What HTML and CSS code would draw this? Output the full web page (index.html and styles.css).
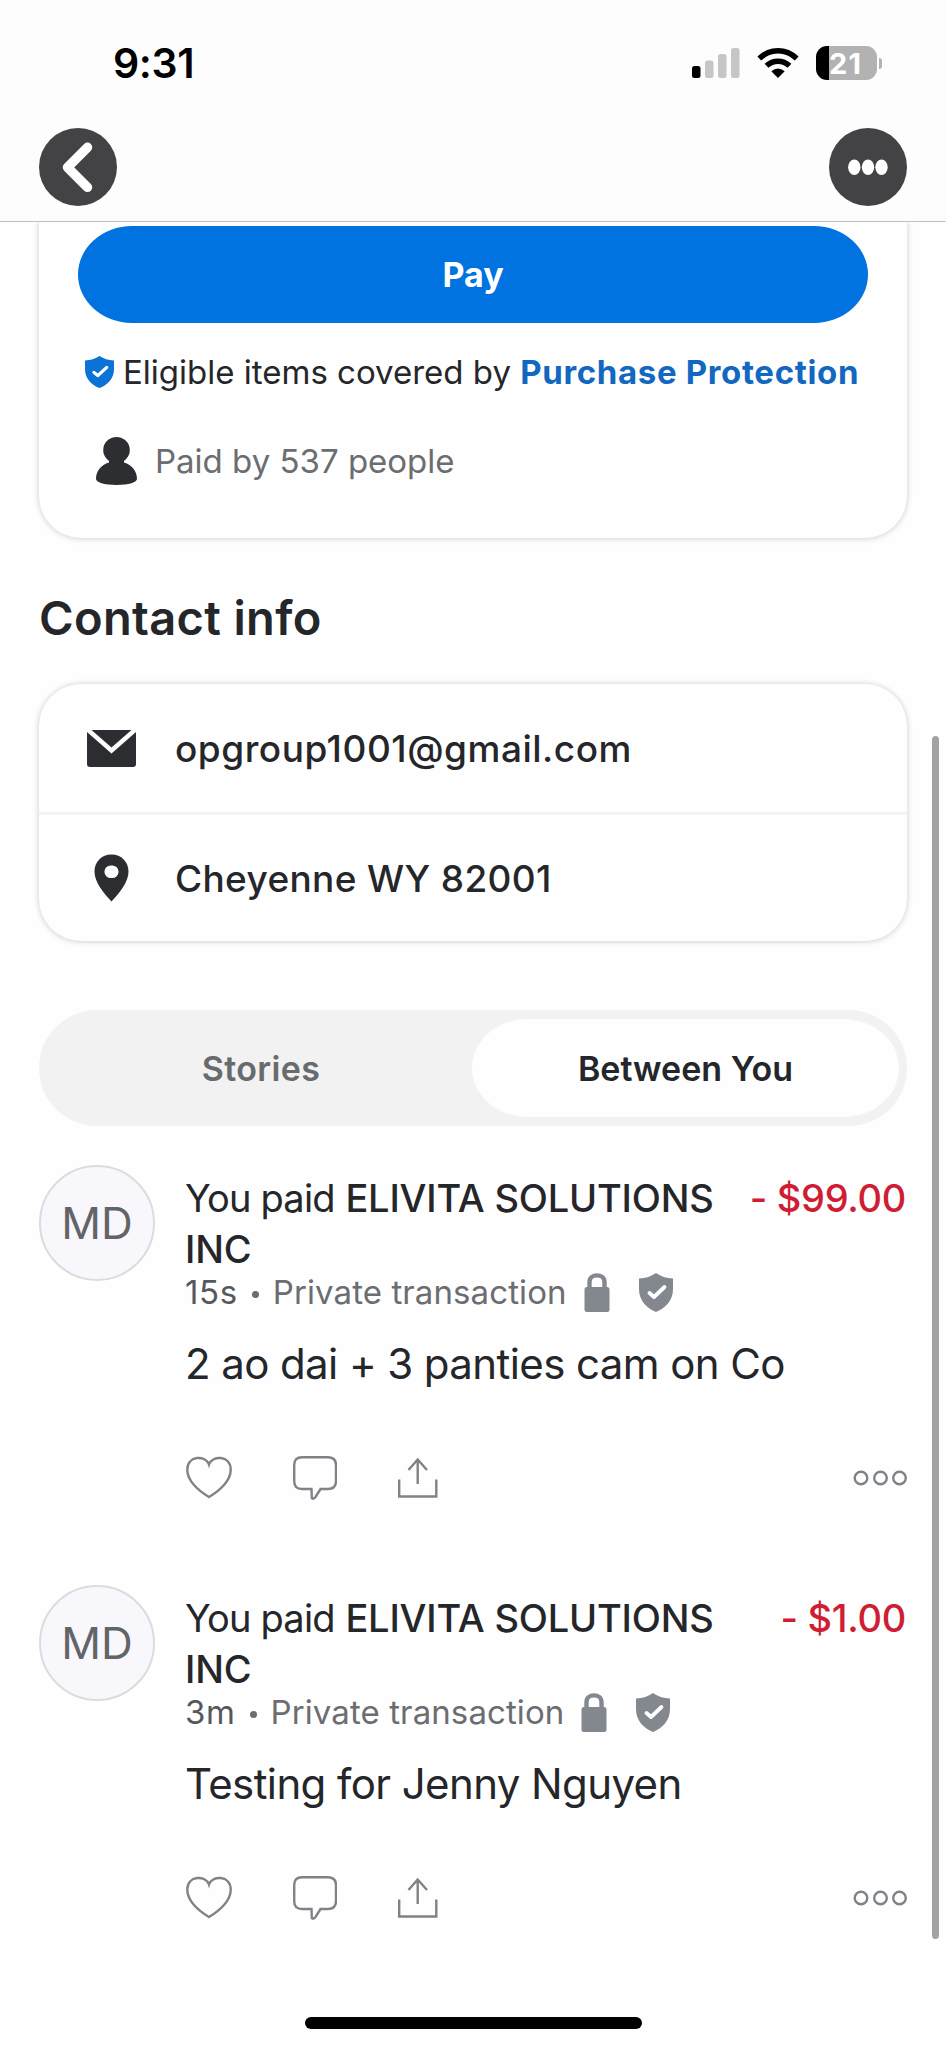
FILE: index.html
```
<!DOCTYPE html>
<html lang="en">
<head>
  <meta charset="UTF-8" />
  <meta name="viewport" content="width=device-width, initial-scale=1.0"/>
  <title>ELIVITA SOLUTIONS INC</title>
  <link rel="stylesheet" href="styles.css">
</head>
<body>

  <!-- shared icons -->
  <svg class="sprite" width="0" height="0">
    <symbol id="icon-shield" viewBox="0 0 34 39">
      <path fill="currentColor" d="M17 0 C22 3.5 27 5 34 5.500 V16 C34 27 27 35 17 39 C7 35 0 27 0 16 V5.500 C7 5 12 3.500 17 0 Z"/>
      <path fill="none" stroke="#fff" stroke-width="3.800" stroke-linecap="round" stroke-linejoin="round" d="M10.500 20 L15 24 L25.500 14"/>
    </symbol>
    <symbol id="icon-lock" viewBox="0 0 26 39">
      <path fill="none" stroke="currentColor" stroke-width="4.400" d="M5.500 16 V9 C5.500 0.200 20.500 0.200 20.500 9 V16"/>
      <rect x="0.500" y="14" width="25" height="25" rx="2.500" fill="currentColor"/>
    </symbol>
    <symbol id="icon-heart" viewBox="0 0 46 44">
      <path d="M23 8.500 C20 -1 1 -1 1.300 14 C1.300 24.500 12 34.500 23 41 C34 34.500 44.700 24.500 44.700 14 C45 -1 26 -1 23 8.500 Z"/>
    </symbol>
    <symbol id="icon-comment" viewBox="0 0 44 44">
      <path d="M9 1.200 H35 Q43 1.200 43 9.200 V25 Q43 33 35 33 H27.500 L22.500 41 Q20.500 43.500 18.800 42 L18.500 33 H9 Q1.200 33 1.200 25 V9.200 Q1.200 1.200 9 1.200 Z"/>
    </symbol>
    <symbol id="icon-share" viewBox="0 0 40 44">
      <path d="M1.200 23.500 V40.500 H38.300 V23.500 M19.700 28 V3.500 M10.500 14 L19.700 3.500 L29 14"/>
    </symbol>
    <symbol id="icon-dots" viewBox="0 0 54 16">
      <circle cx="8" cy="8" r="6.300"/>
      <circle cx="27.500" cy="8" r="6.300"/>
      <circle cx="46.500" cy="8" r="6.300"/>
    </symbol>
  </svg>

  <header class="header">
    <div class="status-bar">
      <div class="time">9:31</div>
      <div class="status-icons">
        <svg class="signal" width="48" height="30" viewBox="0 0 48 30">
          <rect x="0" y="18" width="8.500" height="12" rx="2.500" fill="#000"/>
          <rect x="13" y="12.500" width="8.500" height="17.500" rx="2.500" fill="#c6c6c6"/>
          <rect x="26" y="6" width="8.500" height="24" rx="2.500" fill="#c6c6c6"/>
          <rect x="39" y="0" width="8.500" height="30" rx="2.500" fill="#c6c6c6"/>
        </svg>
        <svg class="wifi" width="42" height="30" viewBox="0 0 42 30">
          <path fill="none" stroke="#000" stroke-width="5.500" d="M2.300 10.500 Q10.500 2.800 21 2.800 Q31.500 2.800 39.700 10.500"/>
          <path fill="none" stroke="#000" stroke-width="5.500" d="M9.500 17.800 Q14.500 13.200 21 13.200 Q27.500 13.200 32.500 17.800"/>
          <path fill="#000" d="M21 30 L14.300 23.300 Q21 17.700 27.700 23.300 Z"/>
        </svg>
        <div class="battery"><span>21</span></div>
      </div>
    </div>
    <div class="nav">
      <button class="round-btn" aria-label="Back">
        <svg width="78" height="78" viewBox="0 0 78 78">
          <path fill="none" stroke="#fff" stroke-width="9.500" stroke-linecap="round" stroke-linejoin="round" d="M48.500 19.300 L28.500 39.300 L48.500 59.300"/>
        </svg>
      </button>
      <button class="round-btn" aria-label="More">
        <svg width="78" height="78" viewBox="0 0 78 78" fill="#fff">
          <ellipse cx="25.300" cy="39.300" rx="6.200" ry="7.700"/>
          <ellipse cx="39" cy="39.300" rx="6.200" ry="7.700"/>
          <ellipse cx="52.500" cy="39.300" rx="6.200" ry="7.700"/>
        </svg>
      </button>
    </div>
  </header>

  <main class="content">
    <section class="card pay-card">
      <button class="pay-btn">Pay</button>
      <div class="protection">
        <svg width="29" height="32" viewBox="0 0 34 39" preserveAspectRatio="none"><use href="#icon-shield" width="34" height="39"/></svg>
        <p>Eligible items covered by <a href="#">Purchase Protection</a></p>
      </div>
      <div class="paid-by">
        <svg width="41" height="48" viewBox="0 0 41 48" fill="#2c2e32">
          <ellipse cx="20.500" cy="13" rx="13.300" ry="13"/>
          <path d="M13 21 H28 V25.500 C36 28 41 34 41 42 C41 45 33 48 20.500 48 C8 48 0 45 0 42 C0 34 5 28 13 25.500 Z"/>
        </svg>
        <p>Paid by 537 people</p>
      </div>
    </section>

    <h2 class="heading">Contact info</h2>
    <section class="card contact">
      <div class="contact-row">
        <svg width="49" height="37" viewBox="0 0 49 37" fill="#2b2d31">
          <path d="M4.500 0 H44.500 L24.500 17.500 Z"/>
          <path d="M0 2 L24.500 23.500 L49 2 V34 Q49 37 46 37 H3 Q0 37 0 34 Z"/>
        </svg>
        <span>opgroup1001@gmail.com</span>
      </div>
      <div class="contact-row">
        <svg width="49" height="48" viewBox="0 0 49 48">
          <path fill="#2b2d31" fill-rule="evenodd" d="M24.500 0.500 C34.500 0.500 41.500 8 41.500 17.500 C41.500 28 33 38.500 24.500 47.500 C16 38.500 7.500 28 7.500 17.500 C7.500 8 14.500 0.500 24.500 0.500 Z M24.500 11.500 A6.300 6.300 0 1 0 24.500 24 A6.300 6.300 0 1 0 24.500 11.500 Z"/>
        </svg>
        <span class="address">Cheyenne WY 82001</span>
      </div>
    </section>

    <div class="tabs">
      <button class="tab">Stories</button>
      <button class="tab active">Between You</button>
    </div>

    <article class="transaction">
      <div class="avatar">MD</div>
      <div class="details">
        <div class="top-line">
          <p class="title"><span class="you">You paid</span> <strong>ELIVITA SOLUTIONS</strong> <strong>INC</strong></p>
          <div class="amount">- $99.00</div>
        </div>
        <div class="meta">
          <p><span class="ago">15s</span><i class="dot"></i>Private transaction</p>
          <svg class="lock" width="26" height="39"><use href="#icon-lock"/></svg>
          <svg width="34" height="39"><use href="#icon-shield"/></svg>
        </div>
        <p class="note">2 ao dai + 3 panties cam on Co</p>
        <div class="actions">
          <svg width="46" height="44"><use href="#icon-heart"/></svg>
          <svg width="44" height="44"><use href="#icon-comment"/></svg>
          <svg width="40" height="44"><use href="#icon-share"/></svg>
          <svg class="more" width="54" height="16"><use href="#icon-dots"/></svg>
        </div>
      </div>
    </article>

    <article class="transaction">
      <div class="avatar">MD</div>
      <div class="details">
        <div class="top-line">
          <p class="title"><span class="you">You paid</span> <strong>ELIVITA SOLUTIONS</strong> <strong>INC</strong></p>
          <div class="amount">- $1.00</div>
        </div>
        <div class="meta">
          <p><span class="ago">3m</span><i class="dot"></i>Private transaction</p>
          <svg class="lock" width="26" height="39"><use href="#icon-lock"/></svg>
          <svg width="34" height="39"><use href="#icon-shield"/></svg>
        </div>
        <p class="note">Testing for Jenny Nguyen</p>
        <div class="actions">
          <svg width="46" height="44"><use href="#icon-heart"/></svg>
          <svg width="44" height="44"><use href="#icon-comment"/></svg>
          <svg width="40" height="44"><use href="#icon-share"/></svg>
          <svg class="more" width="54" height="16"><use href="#icon-dots"/></svg>
        </div>
      </div>
    </article>
  </main>

  <div class="scrollbar"></div>
  <div class="home-indicator"></div>

</body>
</html>
```
FILE: styles.css
```
* {
  box-sizing: border-box;
}

body {
  margin: 0;
  height: 2048px;
  overflow: hidden;
  position: relative;
  font-family: Inter, "Liberation Sans", sans-serif;
  background: #fefefe;
  color: #25262a;
}

p, h2 {
  margin: 0;
}

button {
  border: none;
  padding: 0;
  font-family: inherit;
}

svg {
  display: block;
  flex: none;
}

.sprite {
  position: absolute;
}

/* header */
.header {
  position: fixed;
  top: 0;
  left: 0;
  right: 0;
  height: 222px;
  background: #fdfdfd;
  border-bottom: 1px solid #c0c0c0;
  z-index: 2;
}

.status-bar {
  display: flex;
  justify-content: space-between;
  align-items: center;
  height: 128px;
  padding: 0 64px 2px 113px;
}

.time {
  font-size: 41px;
  font-weight: 600;
  letter-spacing: -0.4px;
  color: #000;
}

.status-icons {
  display: flex;
  align-items: center;
}

.wifi {
  margin: 0 17px;
}

.battery {
  position: relative;
  display: flex;
  align-items: center;
  justify-content: center;
  width: 61px;
  height: 34px;
  margin-right: 5px;
  border-radius: 11px;
  background: linear-gradient(to right, #000 13px, #b2b2b2 13px);
  color: #fff;
  font-size: 29px;
  font-weight: 700;
}

.battery span {
  padding-right: 2px;
  letter-spacing: 1px;
}

.battery::after {
  content: "";
  position: absolute;
  right: -5px;
  top: 12px;
  width: 3px;
  height: 11px;
  border-radius: 0 4px 4px 0;
  background: #b2b2b2;
}

.nav {
  display: flex;
  justify-content: space-between;
  padding: 0 39px;
}

.round-btn {
  width: 78px;
  height: 78px;
  border-radius: 50%;
  background: #434346;
}

/* page */
.content {
  padding: 222px 39px 0;
}

.card {
  background: #fefefe;
  border-radius: 42px;
  box-shadow: 0 0 5px 1px rgba(0, 0, 0, 0.13), 0 2px 8px rgba(0, 0, 0, 0.04);
}

.pay-card {
  height: 316px;
  padding: 4px 39px 0;
  border-radius: 0 0 42px 42px;
}

.pay-btn {
  display: block;
  width: 100%;
  height: 97px;
  border-radius: 54px / 48.5px;
  background: #0073e0;
  color: #fff;
  font-size: 34px;
  font-weight: 700;
}

.protection {
  display: flex;
  align-items: center;
  gap: 9px;
  margin-top: 25px;
  padding-left: 7px;
  font-size: 33px;
  line-height: 48px;
  white-space: nowrap;
  color: #25262a;
}

.protection svg {
  color: #0b72d6;
}

.protection a {
  color: #1268c0;
  font-weight: 700;
  letter-spacing: 0.65px;
  text-decoration: none;
}

.paid-by {
  display: flex;
  align-items: center;
  gap: 18px;
  margin-top: 41px;
  padding-left: 18px;
  font-size: 33px;
  line-height: 48px;
  color: #6b6d70;
}

.heading {
  margin: 52px 0 38px;
  font-size: 47px;
  font-weight: 600;
  line-height: 56px;
  letter-spacing: 0.35px;
}

.contact-row {
  display: flex;
  align-items: center;
  gap: 39px;
  height: 128px;
  padding-left: 48px;
  font-size: 37px;
  font-weight: 500;
  letter-spacing: 0.52px;
}

.contact-row + .contact-row {
  height: 129px;
  border-top: 3px solid #f3f3f3;
}

.address {
  letter-spacing: 0.35px;
}

.tabs {
  display: grid;
  grid-template-columns: 1fr 1fr;
  height: 116px;
  margin-top: 69px;
  padding: 9px 8px 9px 6px;
  border-radius: 60px;
  background: #f2f2f2;
}

.tab {
  border-radius: 56px / 49px;
  padding-left: 5px;
  background: none;
  color: #686b6e;
  font-size: 34px;
  font-weight: 600;
  letter-spacing: 0.35px;
}

.tab.active {
  padding: 0;
  background: #fefefe;
  color: #25262a;
  letter-spacing: 0;
}

/* transactions */
.transaction {
  display: flex;
  gap: 30px;
  margin-top: 39px;
}

.transaction + .transaction {
  margin-top: 85px;
}

.avatar {
  display: flex;
  align-items: center;
  justify-content: center;
  flex: none;
  width: 116px;
  height: 116px;
  border: 2px solid #dcdcde;
  border-radius: 50%;
  background: #f7f7fc;
  color: #626468;
  font-size: 44px;
}

.details {
  flex: 1;
  padding-top: 8px;
}

.top-line {
  display: flex;
  justify-content: space-between;
  font-size: 38px;
  line-height: 51px;
}

.title {
  width: 560px;
}

.title strong {
  font-weight: 500;
  letter-spacing: -0.2px;
}

.you {
  letter-spacing: -0.82px;
}

.amount {
  padding-right: 1px;
  color: #cf1d33;
  font-weight: 500;
  letter-spacing: -0.3px;
  white-space: nowrap;
}

.meta {
  display: flex;
  align-items: center;
  margin-top: -2px;
  height: 39px;
  color: #83878e;
}

.meta p {
  color: #6b6d70;
  font-size: 33px;
  line-height: 37px;
  letter-spacing: 0.1px;
}

.ago {
  color: #56585c;
  letter-spacing: 0.6px;
}

.dot {
  display: inline-block;
  width: 7px;
  height: 7px;
  margin: 0 14px 6px;
  border-radius: 50%;
  background: #6b6d70;
}

.lock {
  margin: 0 29px 0 17px;
}

.note {
  margin: 26px 0 66px;
  font-size: 42px;
  line-height: 52px;
  letter-spacing: -0.6px;
}

.actions {
  display: flex;
  align-items: center;
  gap: 61px;
  padding-left: 1px;
  fill: none;
  stroke: #7f8387;
  stroke-width: 2.4;
}

.more {
  margin-left: auto;
}

.scrollbar {
  position: fixed;
  top: 736px;
  right: 7px;
  width: 7px;
  height: 1203px;
  border-radius: 4px;
  background: #a3a3a3;
}

.home-indicator {
  position: fixed;
  left: 305px;
  bottom: 19px;
  width: 337px;
  height: 12px;
  border-radius: 6px;
  background: #000;
}
```
